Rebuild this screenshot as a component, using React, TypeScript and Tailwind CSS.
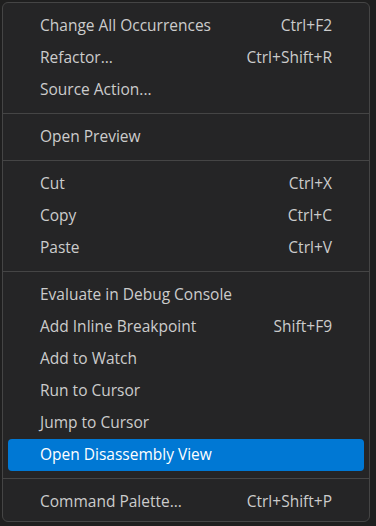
import React from "react";

type Item = { label: string; keys?: string; active?: boolean };

const groups: Item[][] = [
  [
    { label: "Change All Occurrences", keys: "Ctrl+F2" },
    { label: "Refactor...", keys: "Ctrl+Shift+R" },
    { label: "Source Action..." },
  ],
  [{ label: "Open Preview" }],
  [
    { label: "Cut", keys: "Ctrl+X" },
    { label: "Copy", keys: "Ctrl+C" },
    { label: "Paste", keys: "Ctrl+V" },
  ],
  [
    { label: "Evaluate in Debug Console" },
    { label: "Add Inline Breakpoint", keys: "Shift+F9" },
    { label: "Add to Watch" },
    { label: "Run to Cursor" },
    { label: "Jump to Cursor" },
    { label: "Open Disassembly View", active: true },
  ],
  [{ label: "Command Palette...", keys: "Ctrl+Shift+P" }],
];

function MenuRow({ item }: { item: Item }) {
  return (
    <div
      className={
        item.active
          ? "mx-[5px] flex h-[32px] items-center justify-between rounded-[4px] bg-[#0078d4] px-[32px] text-white"
          : "mx-[5px] flex h-[32px] items-center justify-between rounded-[4px] px-[32px] text-[#cccccc]"
      }
    >
      <span>{item.label}</span>
      {item.keys && <span>{item.keys}</span>}
    </div>
  );
}

export default function App() {
  return (
    <div
      className="h-[526px] w-[376px] bg-[#1f1f1f] p-[2px] pr-[6px]"
      style={{ fontFamily: '"Open Sans", "Noto Sans", sans-serif' }}
    >
      <div className="flex h-[520px] flex-col rounded-[6px] border border-[#454545] bg-[#252526] pt-[6.5px] pb-[3.5px] text-[15.5px] leading-none">
        {groups.map((group, gi) => (
          <React.Fragment key={gi}>
            {gi > 0 && (
              <div className="flex h-[15px] flex-col pt-[7px]">
                <div className="h-px bg-[#454545]" />
              </div>
            )}
            {group.map((item) => (
              <MenuRow key={item.label} item={item} />
            ))}
          </React.Fragment>
        ))}
      </div>
    </div>
  );
}
